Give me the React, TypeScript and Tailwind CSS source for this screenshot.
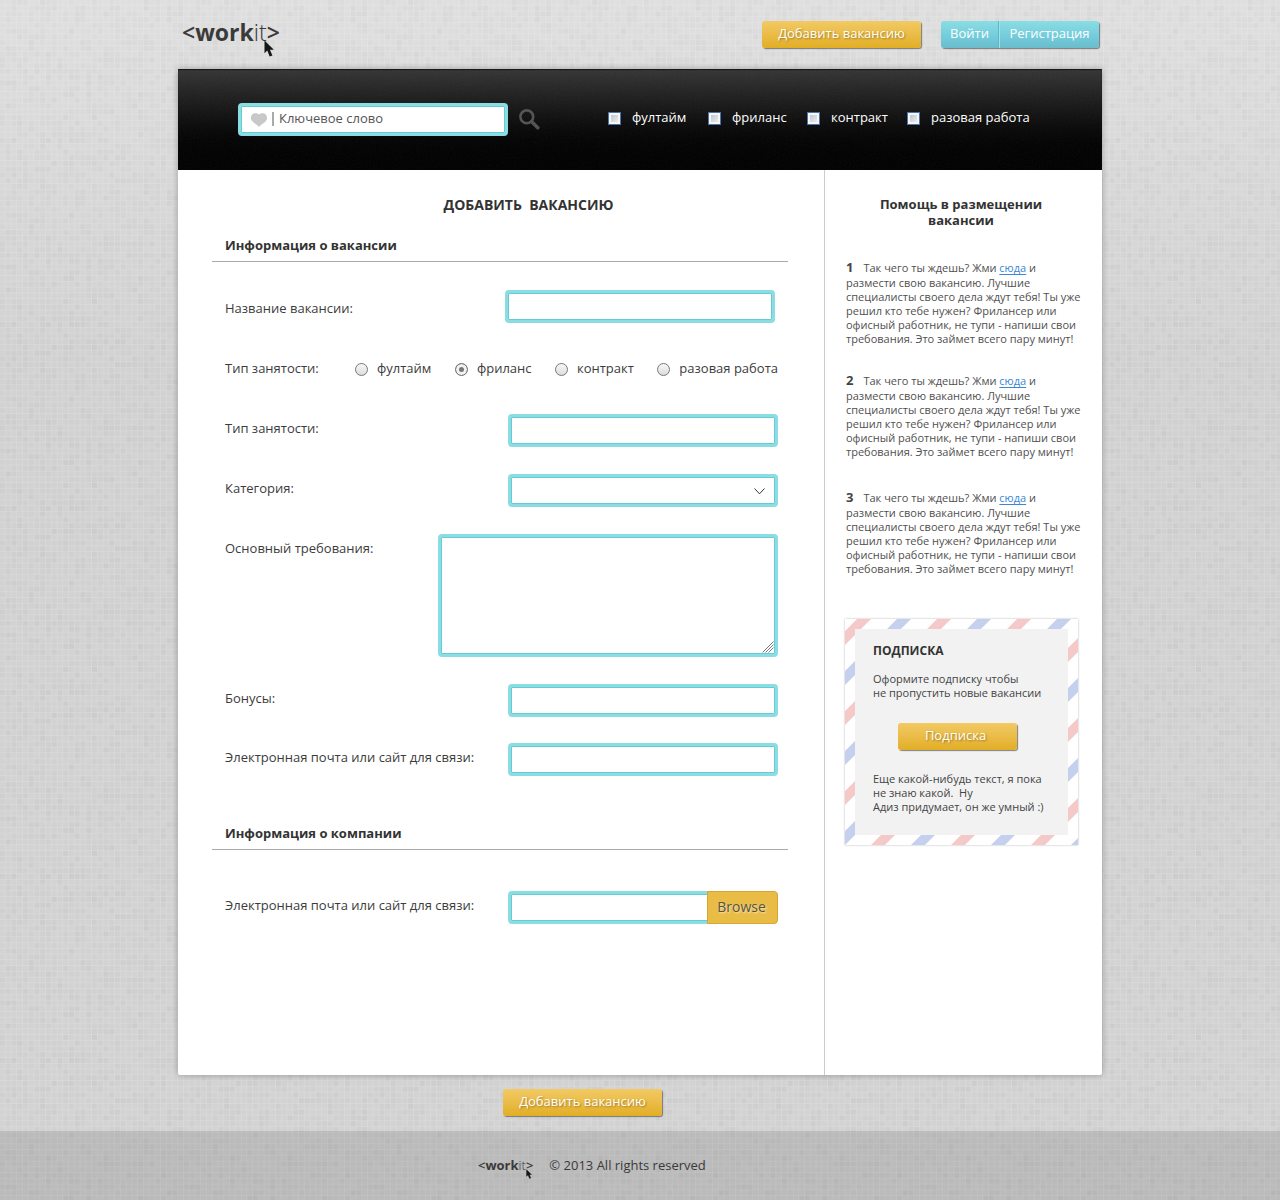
import type { ReactNode } from "react";

const CELLS = 32;
const PITCH = 5.75;

const cells = Array.from({ length: CELLS * CELLS }, (_, i) => {
  const n = Math.sin(i * 12.9898 + 4.1) * 43758.5453;
  const value = n - Math.floor(n);
  return {
    x: (i % CELLS) * PITCH,
    y: Math.floor(i / CELLS) * PITCH,
    opacity: value > 0.4 ? (value - 0.4) * 0.045 : 0,
  };
});

function Backdrop() {
  const size = CELLS * PITCH;
  return (
    <svg className="pointer-events-none absolute inset-0 h-full w-full" aria-hidden="true">
      <defs>
        <pattern id="mosaic" width={size} height={size} patternUnits="userSpaceOnUse">
          {cells.map((c, i) => (
            <rect key={i} x={c.x} y={c.y} width={5} height={5} fill="#000" opacity={c.opacity} />
          ))}
        </pattern>
        <pattern id="grid" width={PITCH} height={PITCH} patternUnits="userSpaceOnUse">
          <path d={`M5.3 0V${PITCH}M0 5.3H${PITCH}`} stroke="#fff" strokeOpacity="0.12" strokeWidth="0.9" />
        </pattern>
      </defs>
      <rect width="100%" height="100%" fill="url(#mosaic)" />
      <rect width="100%" height="100%" fill="url(#grid)" />
    </svg>
  );
}

function Grain() {
  return (
    <svg className="pointer-events-none absolute inset-0 h-full w-full opacity-5" aria-hidden="true">
      <filter id="grain">
        <feTurbulence type="fractalNoise" baseFrequency="0.7" numOctaves="2" seed="3" />
        <feColorMatrix type="saturate" values="0" />
      </filter>
      <rect width="100%" height="100%" filter="url(#grain)" />
    </svg>
  );
}

function Pointer({ className }: { className: string }) {
  return (
    <svg viewBox="0 0 10 17" className={className} aria-hidden="true">
      <path d="M0.5 0.5V13.2L3.3 10.6L5.6 16.6L8.4 15.4L5.9 9.8H9.8Z" fill="#161616" />
    </svg>
  );
}

function LogoText() {
  return (
    <>
      <span className="font-semibold">&lt;</span>
      <span className="font-bold">work</span>
      <span className="font-light">it</span>
      <span className="font-semibold">&gt;</span>
    </>
  );
}

function GoldButton({ children, className }: { children: ReactNode; className: string }) {
  return (
    <button
      type="button"
      className={`h-[27px] rounded-[3px] bg-linear-to-b from-[#f2ca63] to-[#e2ae22] pb-[3px] text-[13px] leading-6 text-white shadow-[1px_1px_1px_rgba(80,80,90,0.7)] [text-shadow:1px_1px_2px_rgba(110,80,0,0.6)] ${className}`}
    >
      {children}
    </button>
  );
}

const field =
  "block rounded-[4px] border-[3px] border-[#8cdce3] bg-white px-2 text-[13px] text-[#444] shadow-[inset_0_0_0_1px_#62cdd4] outline-none";

function Row({ id, label, children }: { id: string; label: string; children: ReactNode }) {
  return (
    <div className="flex items-start justify-between">
      <label htmlFor={id} className="pt-1 leading-5">
        {label}
      </label>
      {children}
    </div>
  );
}

function SectionTitle({ children }: { children: ReactNode }) {
  return (
    <h2 className="border-b border-[#aaa] pb-1.5 pl-[13px] text-[13px] leading-5 font-bold text-[#333]">{children}</h2>
  );
}

const kinds = ["фултайм", "фриланс", "контракт", "разовая работа"];

function Tip({ n, className }: { n: number; className: string }) {
  return (
    <li className={`text-[11px] leading-[14px] text-[#505050] ${className}`}>
      <b className="mr-2.5 text-[13px] leading-[17px] text-[#444]">{n}</b>
      Так чего ты ждешь? Жми{" "}
      <a href="#post" className="text-[#3a87d8] underline underline-offset-2">
        сюда
      </a>{" "}
      и<br />
      размести свою вакансию. Лучшие
      <br />
      специалисты своего дела ждут тебя! Ты уже
      <br />
      решил кто тебе нужен? Фрилансер или
      <br />
      офисный работник, не тупи - напиши свои
      <br />
      требования. Это займет всего пару минут!
    </li>
  );
}

function Subscribe() {
  return (
    <section className="relative mr-6 ml-5 bg-white p-[10px] shadow-[0_0_2px_rgba(0,0,0,0.3)]">
      <svg className="absolute inset-0 h-full w-full" aria-hidden="true">
        <defs>
          <pattern id="airmail" width="80" height="80" patternUnits="userSpaceOnUse">
            <path d="M12 0H26L0 26V12ZM80 12V26L26 80H12Z" fill="#f6c9c9" />
            <path d="M52 0H66L0 66V52ZM80 52V66L66 80H52Z" fill="#c5d0ee" />
          </pattern>
        </defs>
        <rect width="100%" height="100%" fill="url(#airmail)" />
      </svg>
      <div className="relative bg-[#f2f2f2] px-[18px] pt-[13px] pb-[21px] text-[11px] leading-[14px] text-[#444]">
        <h2 className="text-xs leading-[18px] font-bold text-[#333]">ПОДПИСКА</h2>
        <p className="mt-3 whitespace-nowrap">
          Оформите подписку чтобы
          <br />
          не пропустить новые вакансии
        </p>
        <GoldButton className="mt-[23px] ml-[25px] block w-[119px] pr-1">Подписка</GoldButton>
        <p className="mt-[22px] whitespace-nowrap">
          Еще какой-нибудь текст, я пока
          <br />
          не знаю какой.&nbsp; Ну
          <br />
          Адиз придумает, он же умный :)
        </p>
      </div>
    </section>
  );
}

export default function App() {
  return (
    <div className="relative flex min-h-screen flex-col bg-linear-to-b from-[#dfdfdf] via-[#d2d2d2] via-30% to-[#d3d3d3] font-['Open_Sans','Noto_Sans',sans-serif] text-[13px] text-[#3c3c3c]">
      <Backdrop />

      <div className="relative mx-auto w-full max-w-[924px]">
        <header className="flex h-[69px] items-start justify-between pr-[3px] pl-1">
          <a href="#home" aria-label="workit" className="relative mt-[17px] text-[23px] leading-[30px] text-[#3a3a3a]">
            <LogoText />
            <Pointer className="absolute top-[23px] left-[82px] h-[17px] w-[10px]" />
          </a>
          <div className="mt-[21px] flex gap-5">
            <GoldButton className="w-[159px]">Добавить вакансию</GoldButton>
            <div className="flex h-[27px] rounded-[3px] bg-linear-to-b from-[#8adde3] via-[#72cbdb] via-60% to-[#6bbccb] text-[13px] leading-6 text-white shadow-[1px_1px_1px_rgba(80,80,90,0.7)] [text-shadow:1px_1px_2px_rgba(20,80,100,0.6)]">
              <button type="button" className="w-[58px] border-r border-[#5fb6c5] pb-[3px]">
                Войти
              </button>
              <button type="button" className="w-[100px] border-l border-[#9fe2ea] pb-[3px]">
                Регистрация
              </button>
            </div>
          </div>
        </header>

        <div className="rounded-b-[2px] bg-white shadow-[0_0_6px_rgba(0,0,0,0.3)]">
          <form className="relative flex h-[101px] items-center bg-linear-to-b from-[#353535] to-black pl-[60px] shadow-[inset_0_1px_1px_#111]">
            <Grain />
            <div className="relative w-[270px]">
              <svg viewBox="0 0 16 14" className="absolute top-[10px] left-[13px] h-[14px] w-4" aria-hidden="true">
                <path
                  d="M8 1.6C6.4-0.5 0-0.8 0 5C0 9.4 5.4 10.6 8 14C10.6 10.6 16 9.4 16 5C16-0.8 9.6-0.5 8 1.6Z"
                  fill="#c8c8c8"
                />
              </svg>
              <span className="absolute top-[9px] left-[34px] h-[14px] w-0.5 bg-[#aaa]" />
              <input
                type="text"
                aria-label="Ключевое слово"
                placeholder="Ключевое слово"
                className={`${field} h-[33px] w-full pb-1 pl-[38px] placeholder:text-[#555]`}
              />
            </div>
            <button type="submit" aria-label="Поиск" className="relative ml-[11px]">
              <svg viewBox="0 0 21 21" className="h-[21px] w-[21px]" fill="none" stroke="#555" aria-hidden="true">
                <circle cx="7.8" cy="7.8" r="6.4" strokeWidth="2.6" />
                <path d="M12.5 12.5L18.8 18.8" strokeWidth="3.4" strokeLinecap="round" />
              </svg>
            </button>
            <div className="relative ml-[68px] grid grid-cols-[100px_99px_100px_auto] pb-[5px] whitespace-nowrap text-white">
              {kinds.map((k) => (
                <label key={k} className="flex items-center gap-[11px] leading-5">
                  <input
                    type="checkbox"
                    className="mt-[3px] h-[13px] w-[13px] shrink-0 appearance-none border border-[#4a74ae] bg-linear-to-br from-[#b4b8c0] to-[#fafafa] bg-origin-border shadow-[inset_0_0_0_2px_#f4f6f8]"
                  />
                  {k}
                </label>
              ))}
            </div>
          </form>

          <div className="flex">
            <main className="min-w-0 flex-1 pt-[25px] pr-9 pb-[151px] pl-[34px]">
              <h1 className="pl-[57px] text-center text-sm leading-5 font-bold whitespace-pre text-[#333]">
                ДОБАВИТЬ{"  "}ВАКАНСИЮ
              </h1>

              <form className="mt-5">
                <SectionTitle>Информация о вакансии</SectionTitle>
                <div className="flex flex-col gap-[27px] pt-7 pr-[10px] pl-[13px]">
                  <div className="flex h-[37px] items-start justify-between pr-[3px]">
                    <label htmlFor="title" className="pt-2 leading-5">
                      Название вакансии:
                    </label>
                    <input id="title" type="text" className={`${field} h-[33px] w-[270px]`} />
                  </div>
                  <fieldset className="flex h-[33px] items-start justify-between pt-1">
                    <legend className="float-left leading-5">Тип занятости:</legend>
                    <div className="flex w-[423px] justify-between">
                      {kinds.map((k, i) => (
                        <label key={k} className="flex items-center gap-[9px] leading-5">
                          <input
                            type="radio"
                            name="kind"
                            defaultChecked={i === 1}
                            className="mt-0.5 h-[13px] w-[13px] appearance-none rounded-full border border-[#777] bg-linear-to-b from-[#f8f8f8] to-[#dcdcdc] checked:bg-[#777] checked:bg-none checked:shadow-[inset_0_0_0_3px_#f2f2f2]"
                          />
                          {k}
                        </label>
                      ))}
                    </div>
                  </fieldset>
                  <Row id="type" label="Тип занятости:">
                    <input id="type" type="text" className={`${field} h-[33px] w-[270px]`} />
                  </Row>
                  <Row id="category" label="Категория:">
                    <div className="relative w-[270px]">
                      <select id="category" className={`${field} h-[33px] w-full appearance-none`}>
                        <option></option>
                      </select>
                      <svg
                        viewBox="0 0 11 7"
                        className="pointer-events-none absolute top-[14px] right-[13px] h-[7px] w-[11px]"
                        aria-hidden="true"
                      >
                        <path d="M0.5 0.5L5.5 5.8L10.5 0.5" fill="none" stroke="#333" />
                      </svg>
                    </div>
                  </Row>
                  <Row id="needs" label="Основный требования:">
                    <div className="relative w-[340px]">
                      <textarea id="needs" className={`${field} h-[123px] w-full resize-none`} />
                      <svg
                        viewBox="0 0 12 12"
                        className="pointer-events-none absolute right-1 bottom-1 h-3 w-3"
                        aria-hidden="true"
                      >
                        <path
                          d="M0.5 11.5L11.5 0.5M3.5 11.5L11.5 3.5M6.5 11.5L11.5 6.5"
                          stroke="#555"
                          strokeWidth="0.8"
                        />
                      </svg>
                    </div>
                  </Row>
                  <div className="flex flex-col gap-[26px]">
                    <Row id="bonus" label="Бонусы:">
                      <input id="bonus" type="text" className={`${field} h-[33px] w-[270px]`} />
                    </Row>
                    <Row id="contact" label="Электронная почта или сайт для связи:">
                      <input id="contact" type="text" className={`${field} h-[33px] w-[270px]`} />
                    </Row>
                  </div>
                </div>

                <div className="mt-[47px]">
                  <SectionTitle>Информация о компании</SectionTitle>
                </div>
                <div className="pt-[41px] pr-[10px] pl-[13px]">
                  <Row id="company" label="Электронная почта или сайт для связи:">
                    <div className="flex w-[270px]">
                      <input
                        id="company"
                        type="text"
                        className={`${field} h-[33px] min-w-0 flex-1 rounded-r-none border-r-0`}
                      />
                      <button
                        type="button"
                        className="-ml-px h-[33px] w-[71px] rounded-r-[4px] border border-[#d6a535] bg-[#e9bc45] pr-0.5 pb-0.5 text-sm text-[#5a5340] [text-shadow:1px_1px_2px_rgba(255,255,255,0.7)]"
                      >
                        Browse
                      </button>
                    </div>
                  </Row>
                </div>
              </form>
            </main>

            <aside className="w-[278px] shrink-0 border-l border-[#ccc] pt-[26px]">
              <h2 className="pr-[5px] text-center text-[13px] leading-4 font-bold text-[#333]">
                Помощь в размещении
                <br />
                вакансии
              </h2>
              <ol className="mt-[31px] pl-[21px] whitespace-nowrap">
                <Tip n={1} className="mb-[26px]" />
                <Tip n={2} className="mb-[30px]" />
                <Tip n={3} className="mb-[43px]" />
              </ol>
              <Subscribe />
            </aside>
          </div>
        </div>

        <div className="flex h-14 items-start pt-[14px] pl-[325px]">
          <GoldButton className="w-[159px]">Добавить вакансию</GoldButton>
        </div>
      </div>

      <footer className="relative flex-1 bg-black/11">
        <div className="mx-auto flex h-[69px] w-full max-w-[924px] items-center pb-0.5 pl-[300px] text-[#3a3a3a]">
          <a href="#home" aria-label="workit" className="relative mr-4 text-[13px] leading-5">
            <LogoText />
            <Pointer className="absolute top-[14px] left-[48px] h-[10px] w-[6px]" />
          </a>
          <p className="text-[13px] leading-5">© 2013 All rights reserved</p>
        </div>
      </footer>
    </div>
  );
}
